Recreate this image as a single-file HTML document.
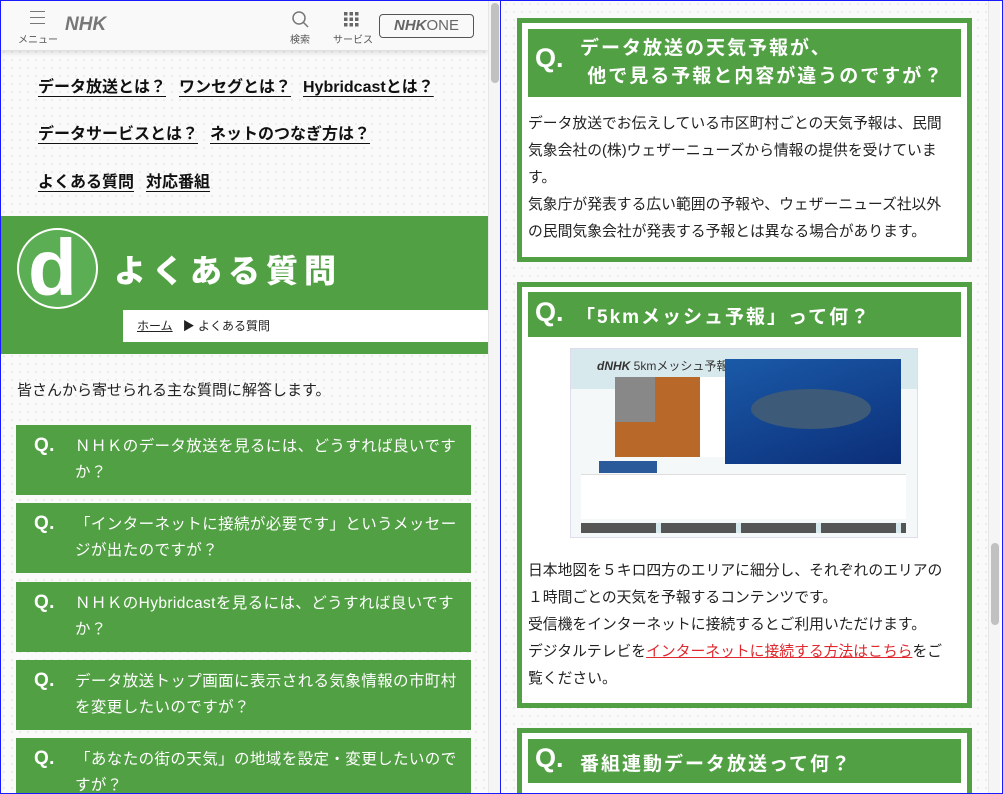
<!DOCTYPE html>
<html><head><meta charset="utf-8"><style>
*{margin:0;padding:0;box-sizing:border-box}
body{width:1003px;height:794px;overflow:hidden;position:relative;background:#fff;font-family:"Liberation Sans","Noto Sans CJK JP",sans-serif;color:#222}
.dots{background-color:#fafafa;background-image:radial-gradient(#ebebeb 1px,transparent 1.3px);background-size:8px 8px}
.pane{position:absolute;top:0;height:794px;overflow:hidden}
#L{left:0;width:488px}
#R{left:502px;width:486px}
.sb{position:absolute;top:0;width:12px;height:794px;background:#f5f5f5;border-left:1px solid #e6e6e6}
.sb i{position:absolute;left:2px;width:8px;background:#c1c1c1;border-radius:4px}
.hdr{position:absolute;left:0;top:0;width:488px;height:50px;background:#f9f9f9;box-shadow:0 2px 6px rgba(0,0,0,.15)}
.hdr .s{position:absolute;font-size:10px;color:#555}
.nav a{position:absolute;font-weight:bold;font-size:16px;color:#111;text-decoration:underline;text-underline-offset:4px;white-space:nowrap}
.g{background:#52a044}
.q{position:absolute;left:16px;width:455px;background:#52a044;color:#fff;font-size:15.5px;line-height:26px;padding:9px 8px 0 59px;letter-spacing:.4px}
.q b{position:absolute;left:18px;top:8px;font-size:19px;font-weight:900}
.card{position:absolute;left:15px;width:455px;border:5px solid #52a044;background:#fff}
.tb{position:absolute;left:6px;right:6px;background:#52a044;color:#fff;font-weight:bold;font-size:19px;letter-spacing:2px}
.tb div{white-space:nowrap}
.tb b{position:absolute;left:7px;font-size:27px;font-weight:900;letter-spacing:0}
.txt{position:absolute;left:6px;width:422px;font-size:14.8px;line-height:27px;color:#222}
</style></head><body>
<div id="L" class="pane dots">
 <div class="hdr">
  <div style="position:absolute;left:30px;top:11px;width:15px;height:13px;border-top:1.5px solid #777;border-bottom:1.5px solid #777"><div style="margin-top:4.5px;border-top:1.5px solid #777"></div></div>
  <div class="s" style="left:18px;top:31px">メニュー</div>
  <div style="position:absolute;left:65px;top:14px;font-size:19px;font-weight:900;font-style:italic;color:#777">NHK</div>
  <svg style="position:absolute;left:291px;top:10px" width="18" height="18"><circle cx="8" cy="8" r="6" fill="none" stroke="#777" stroke-width="1.5"/><path d="M12 12l5 5" stroke="#777" stroke-width="1.5"/></svg>
  <div class="s" style="left:290px;top:31px">検索</div>
  <svg style="position:absolute;left:344px;top:12px" width="15" height="15" fill="#666"><rect x="0" y="0" width="3.5" height="3.5"/><rect x="5.5" y="0" width="3.5" height="3.5"/><rect x="11" y="0" width="3.5" height="3.5"/><rect x="0" y="5.5" width="3.5" height="3.5"/><rect x="5.5" y="5.5" width="3.5" height="3.5"/><rect x="11" y="5.5" width="3.5" height="3.5"/><rect x="0" y="11" width="3.5" height="3.5"/><rect x="5.5" y="11" width="3.5" height="3.5"/><rect x="11" y="11" width="3.5" height="3.5"/></svg>
  <div class="s" style="left:333px;top:31px">サービス</div>
  <div style="position:absolute;left:379px;top:14px;width:95px;height:24px;border:1.5px solid #555;border-radius:4px;font-size:15px;color:#666;text-align:center;line-height:21px"><i style="font-weight:900">NHK</i>ONE</div>
 </div>
 <div class="nav">
  <a style="left:38px;top:73px">データ放送とは？</a>
  <a style="left:179px;top:73px">ワンセグとは？</a>
  <a style="left:303px;top:73px">Hybridcastとは？</a>
  <a style="left:38px;top:120px">データサービスとは？</a>
  <a style="left:210px;top:120px">ネットのつなぎ方は？</a>
  <a style="left:38px;top:168px">よくある質問</a>
  <a style="left:146px;top:168px">対応番組</a>
 </div>
 <div class="g" style="position:absolute;left:0;top:216px;width:488px;height:138px">
  <div style="position:absolute;left:17px;top:12px;width:81px;height:81px;border:2px solid #fff;border-radius:50%;background:#5cae55"></div>
  <div style="position:absolute;left:28px;top:12px;font-size:80px;font-weight:900;color:#fff;line-height:80px">d</div>
  <div style="position:absolute;left:114px;top:30px;font-size:32px;font-weight:900;color:#fff;letter-spacing:6px">よくある質問</div>
  <div style="position:absolute;left:123px;top:94px;width:365px;height:32px;background:#fff;font-size:12px;line-height:32px;padding-left:14px;color:#222"><u>ホーム</u>&nbsp;&nbsp; ▶ よくある質問</div>
 </div>
 <div style="position:absolute;left:17px;top:379px;font-size:15px">皆さんから寄せられる主な質問に解答します。</div>
 <div class="q" style="top:425px;height:70px"><b>Q.</b>ＮＨＫのデータ放送を見るには、どうすれば良いですか？</div>
 <div class="q" style="top:503px;height:70px"><b>Q.</b>「インターネットに接続が必要です」というメッセージが出たのですが？</div>
 <div class="q" style="top:582px;height:70px"><b>Q.</b>ＮＨＫのHybridcastを見るには、どうすれば良いですか？</div>
 <div class="q" style="top:660px;height:70px"><b>Q.</b>データ放送トップ画面に表示される気象情報の市町村を変更したいのですが？</div>
 <div class="q" style="top:738px;height:70px"><b>Q.</b>「あなたの街の天気」の地域を設定・変更したいのですが？</div>
</div>
<div class="sb" style="left:488px"><i style="top:3px;height:80px"></i></div>
<div style="position:absolute;left:500px;top:0;width:2px;height:794px;background:#fff;border-left:1px solid #1a1aff"></div>
<div id="R" class="pane dots">
 <div class="card" style="top:18px;height:244px">
  <div class="tb" style="top:6px;height:68px"><b style="top:14px">Q.</b><div style="position:absolute;left:52px;top:6px;line-height:28px">データ放送の天気予報が、<br>&nbsp;他で見る予報と内容が違うのですが？</div></div>
  <div class="txt" style="top:88px">データ放送でお伝えしている市区町村ごとの天気予報は、民間気象会社の(株)ウェザーニューズから情報の提供を受けています。<br>気象庁が発表する広い範囲の予報や、ウェザーニューズ社以外の民間気象会社が発表する予報とは異なる場合があります。</div>
 </div>
 <div class="card" style="top:282px;height:426px">
  <div class="tb" style="top:5px;height:45px"><b style="top:5px">Q.</b><div style="position:absolute;left:48px;top:10px">「5kmメッシュ予報」って何？</div></div>
  <div style="position:absolute;left:48px;top:61px;width:348px;height:190px;background:#f4f8f8;border:1px solid #dde">
   <div style="position:absolute;left:0;top:0;width:100%;height:40px;background:#d8e9ee"></div>
   <div style="position:absolute;left:26px;top:8px;font-size:12px;color:#333"><i style="font-weight:900">dNHK</i> 5kmメッシュ予報</div>
   <div style="position:absolute;left:44px;top:28px;width:85px;height:80px;background:#b8692a"></div>
   <div style="position:absolute;left:44px;top:28px;width:40px;height:45px;background:#888"></div>
   <div style="position:absolute;left:129px;top:28px;width:32px;height:80px;background:#fff"></div>
   <div style="position:absolute;left:154px;top:10px;width:176px;height:105px;background:linear-gradient(160deg,#1a5aa8,#0c2e78)"></div>
   <div style="position:absolute;left:180px;top:40px;width:120px;height:40px;border-radius:50%;background:#3d5a78"></div>
   <div style="position:absolute;left:28px;top:112px;width:58px;height:12px;background:#2a5a9a"></div>
   <div style="position:absolute;left:10px;top:125px;width:325px;height:45px;background:#fff;border-top:1px solid #ddd"></div>
   <div style="position:absolute;left:10px;top:174px;width:325px;height:10px;background:repeating-linear-gradient(90deg,#555 0 75px,#d8e9ee 75px 80px)"></div>
  </div>
  <div class="txt" style="top:271px">日本地図を５キロ四方のエリアに細分し、それぞれのエリアの１時間ごとの天気を予報するコンテンツです。<br>受信機をインターネットに接続するとご利用いただけます。<br>デジタルテレビを<u style="color:#e0282e">インターネットに接続する方法はこちら</u>をご覧ください。</div>
 </div>
 <div class="card" style="top:728px;height:100px">
  <div class="tb" style="top:6px;height:44px"><b style="top:4px">Q.</b><div style="position:absolute;left:52px;top:10px">番組連動データ放送って何？</div></div>
 </div>
</div>
<div class="sb" style="left:988px"><i style="top:543px;height:82px"></i></div>
<div style="position:absolute;left:1000px;top:0;width:3px;height:794px;background:#fff"></div>
<div style="position:absolute;inset:0;border:1px solid #1a1aff;pointer-events:none"></div>
</body></html>
